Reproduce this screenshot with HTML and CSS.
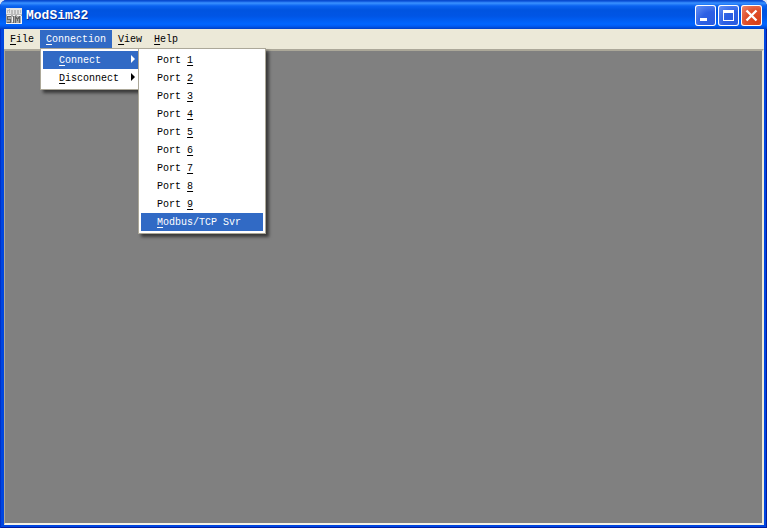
FILE: index.html
```html
<!DOCTYPE html>
<html lang="en">
<head>
<meta charset="utf-8">
<title>ModSim32</title>
<link rel="stylesheet" href="styles.css">
</head>
<body>
<div class="window">
  <header class="titlebar">
    <svg class="app-icon" viewBox="0 0 16 16" aria-hidden="true" shape-rendering="crispEdges">
      <path fill="#e4e4e4" d="M0 0h16v7H0z"/>
      <path fill="#a9a9a9" d="M0 7h16v9H0z"/>
      <path stroke="#bbb" fill="none" d="M1 5V2l1 1 1-1v3M5 2h1v3H5zM8 2v3h1V2zM11 2h1v3h-1zM14 2v3M0 6.500h16"/>
      <path stroke="#f4f4f4" fill="none" d="M1 7.500h4M7 7.500h2M11 7.500h4M0 15.500h16M6.500 9v5M15.500 8v7"/>
      <path stroke="#666" fill="none" d="M5 8.500H1.500v3h3v3H1M7.500 8v7M9.500 15V8M10.500 9v2M11.500 10v3M12.500 9v2M13.500 8v7"/>
    </svg>
    <h1 class="title">ModSim32</h1>
    <div class="controls">
      <button class="control" aria-label="Minimize"><svg viewBox="0 0 21 21"><path fill="#fff" d="M5 13h7v3H5z"/></svg></button>
      <button class="control" aria-label="Maximize"><svg viewBox="0 0 21 21"><path fill="#fff" fill-rule="evenodd" d="M5 5h11v11H5zM6 8v7h9V8z"/></svg></button>
      <button class="control close" aria-label="Close"><svg viewBox="0 0 21 21"><path stroke="#fff" stroke-width="2.400" d="M5.500 5.500l10 10M15.500 5.500l-10 10"/></svg></button>
    </div>
  </header>
  <nav class="menubar">
    <div class="entry"><button class="menu-button"><u>F</u>ile</button></div>
    <div class="entry">
      <button class="menu-button active"><u>C</u>onnection</button>
      <div class="popup connection-menu">
        <button class="item active"><span><u>C</u>onnect</span><svg class="arrow" viewBox="0 0 4 8"><path fill="currentColor" d="M0 0l4 4-4 4z"/></svg></button>
        <button class="item"><span><u>D</u>isconnect</span><svg class="arrow" viewBox="0 0 4 8"><path fill="currentColor" d="M0 0l4 4-4 4z"/></svg></button>
        <div class="popup port-menu">
          <button class="item"><span>Port <u>1</u></span></button>
          <button class="item"><span>Port <u>2</u></span></button>
          <button class="item"><span>Port <u>3</u></span></button>
          <button class="item"><span>Port <u>4</u></span></button>
          <button class="item"><span>Port <u>5</u></span></button>
          <button class="item"><span>Port <u>6</u></span></button>
          <button class="item"><span>Port <u>7</u></span></button>
          <button class="item"><span>Port <u>8</u></span></button>
          <button class="item"><span>Port <u>9</u></span></button>
          <button class="item active"><span><u>M</u>odbus/TCP Svr</span></button>
        </div>
      </div>
    </div>
    <div class="entry"><button class="menu-button"><u>V</u>iew</button></div>
    <div class="entry"><button class="menu-button"><u>H</u>elp</button></div>
  </nav>
  <main class="workspace"></main>
</div>
</body>
</html>
```
FILE: styles.css
```css
* {
  box-sizing: border-box;
}

body {
  margin: 0;
  background: #dce6f5;
  font: 10px/18px "Liberation Mono", monospace;
  color: #000;
}

button {
  margin: 0;
  padding: 0;
  border: 0;
  background: none;
  color: inherit;
  font: inherit;
  text-align: left;
  white-space: pre;
}

u {
  text-underline-offset: 2px;
  text-decoration-thickness: 1px;
}

.window {
  display: flex;
  flex-direction: column;
  min-height: 100vh;
  padding: 0 3px 3px 4px;
  background: #0046e0;
  border-radius: 7px 7px 0 0;
  box-shadow: inset 1px 0 #0030c8, inset -1px -1px #001ca0;
}

.titlebar {
  display: flex;
  align-items: center;
  height: 29px;
  margin: 0 -3px 0 -4px;
  padding: 2px 5px 0 6px;
  border-radius: 7px 7px 0 0;
  background: linear-gradient(#0848c8 0, #0a50d8 1px, #3a92ff 3px, #0a62f0 6px, #0054e0 10px, #0055e5 16px, #0066ff 24px, #005cf4 26px, #0040c4 29px);
}

.app-icon {
  width: 16px;
  height: 16px;
}

.title {
  flex: 1;
  margin: 0 0 0 4px;
  color: #fff;
  font: bold 13px/18px "Liberation Mono", monospace;
  text-shadow: 1px 1px #0a2c8c;
}

.controls {
  display: flex;
  gap: 2px;
}

.control {
  width: 21px;
  height: 21px;
  border-radius: 3px;
  background: radial-gradient(circle at 80% 85%, #2a5ce0, #2c60e4 45%, #6c98f8);
  box-shadow: inset 0 0 0 1px #fff;
}

.control svg {
  display: block;
}

.close {
  background: radial-gradient(circle at 75% 80%, #d84018, #e0502c 50%, #f09078);
}

.menubar {
  display: flex;
  height: 20px;
  padding-top: 1px;
  background: #ece9d8;
}

.entry {
  position: relative;
}

.menu-button {
  display: block;
  height: 18px;
  padding: 2px 6px 0;
  line-height: 16px;
}

.active {
  background: #316ac5;
  color: #fff;
}

.popup {
  position: absolute;
  padding: 2px;
  border: 1px solid #aca899;
  background: #fff;
  box-shadow: 3px 3px 3px rgba(0, 0, 0, 0.55);
}

.connection-menu {
  top: 18px;
  left: 0;
  width: 101px;
}

.port-menu {
  top: -1px;
  left: 97px;
  width: 128px;
}

.item {
  display: flex;
  align-items: center;
  justify-content: space-between;
  width: 100%;
  height: 18px;
  padding: 0 3px 0 16px;
}

.item span {
  padding-top: 2px;
}

.arrow {
  width: 4px;
  height: 8px;
  margin-bottom: 2px;
}

.workspace {
  flex: 1;
  border: solid;
  border-width: 2px 2px 2px 1px;
  border-color: #aca899 #ece9d8 #f4f2e8 #aca899;
  background: #808080;
}
```
